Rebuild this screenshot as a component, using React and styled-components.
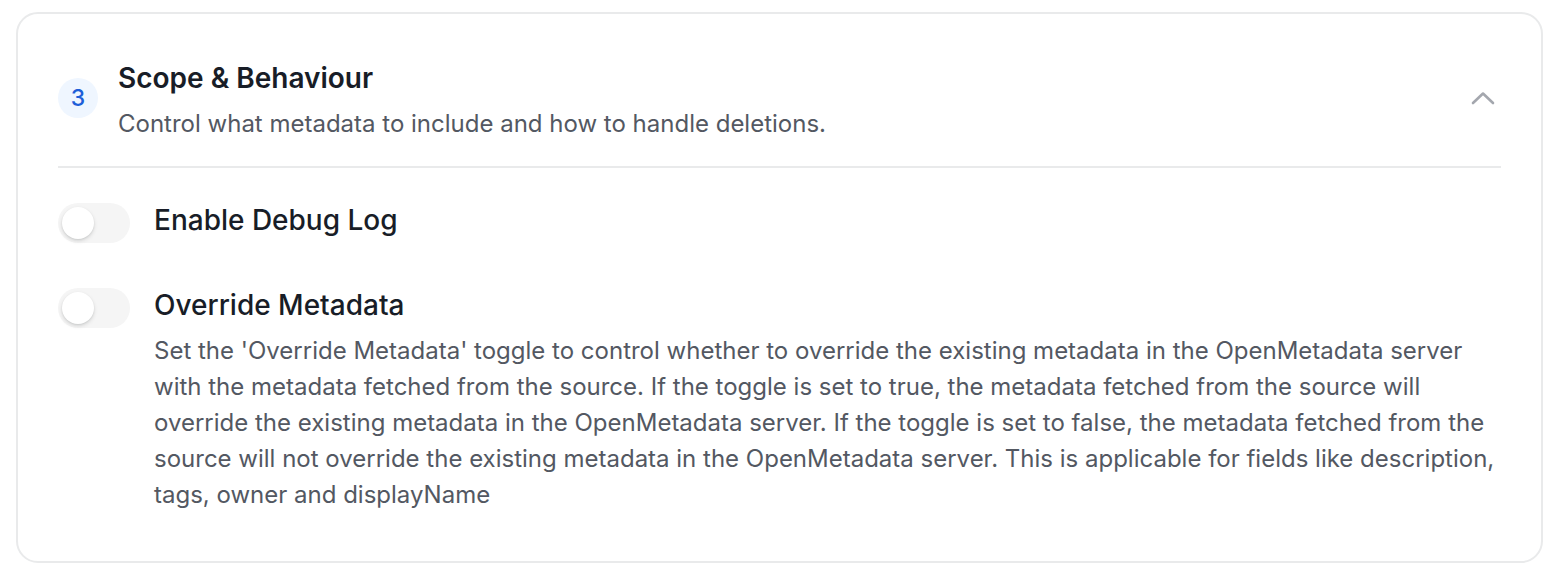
import React, { useState } from "react";
import styled, { createGlobalStyle } from "styled-components";

const GlobalStyle = createGlobalStyle`
  html, body {
    margin: 0;
    padding: 0;
    background: #ffffff;
  }
  body {
    font-family: Inter, "Noto Sans", "Liberation Sans", sans-serif;
    -webkit-font-smoothing: antialiased;
  }
  * { box-sizing: border-box; }
`;

const Page = styled.div`
  padding: 12px 21px 23px 16px;
`;

const Card = styled.section`
  border: 2px solid #e9eaeb;
  border-radius: 22px;
  background: #ffffff;
  padding: 46px 40px 48px 40px;
`;

const Header = styled.div`
  display: flex;
  align-items: center;
  gap: 20px;
  padding-bottom: 26px;
  border-bottom: 2px solid #e9eaeb;
`;

const StepBadge = styled.div`
  flex: 0 0 40px;
  width: 40px;
  height: 40px;
  border-radius: 50%;
  background: #eff6ff;
  color: #1d5fd8;
  display: flex;
  align-items: center;
  justify-content: center;
  font-size: 23px;
  font-weight: 500;
  margin-bottom: 4px;
`;

const HeaderText = styled.div`
  flex: 1;
  display: flex;
  flex-direction: column;
  gap: 12px;
`;

const Title = styled.h2`
  margin: 0;
  font-size: 28px;
  line-height: 36px;
  font-weight: 600;
  color: #181d27;
`;

const Subtitle = styled.p`
  margin: 0;
  font-size: 24px;
  line-height: 32px;
  color: #535862;
`;

const CollapseButton = styled.button`
  border: none;
  background: transparent;
  padding: 0;
  margin: 0 6px 5px 0;
  width: 24px;
  height: 14px;
  display: flex;
  align-items: center;
  justify-content: center;
  cursor: pointer;
  color: #a4a7ae;
`;

const Body = styled.div`
  display: flex;
  flex-direction: column;
  gap: 44px;
  padding-top: 34px;
`;

const ToggleRow = styled.div`
  display: flex;
  align-items: flex-start;
  gap: 24px;
`;

const Track = styled.button`
  flex: 0 0 72px;
  width: 72px;
  height: 40px;
  margin-top: 1px;
  border: none;
  border-radius: 20px;
  padding: 4px;
  background: ${(p) => (p.$on ? "#1570ef" : "#f5f5f5")};
  display: flex;
  justify-content: ${(p) => (p.$on ? "flex-end" : "flex-start")};
  cursor: pointer;
`;

const Knob = styled.span`
  width: 32px;
  height: 32px;
  border-radius: 50%;
  background: #ffffff;
  box-shadow: 0 2px 4px rgba(10, 13, 18, 0.12), 0 1px 2px rgba(10, 13, 18, 0.08);
`;

const ToggleText = styled.div`
  display: flex;
  flex-direction: column;
  gap: 10px;
  min-width: 0;
`;

const Label = styled.div`
  font-size: 28px;
  line-height: 36px;
  font-weight: 500;
  color: #181d27;
`;

const Help = styled.p`
  margin: 0;
  font-size: 24px;
  line-height: 36px;
  color: #535862;
`;

const ChevronUp = () => (
  <svg width="24" height="14" viewBox="0 0 24 14" fill="none">
    <polyline
      points="2,12 12,2.5 22,12"
      stroke="currentColor"
      strokeWidth="2.6"
      strokeLinecap="round"
      strokeLinejoin="round"
    />
  </svg>
);

const Toggle = ({ label, help }) => {
  const [on, setOn] = useState(false);
  return (
    <ToggleRow>
      <Track $on={on} onClick={() => setOn(!on)} aria-pressed={on}>
        <Knob />
      </Track>
      <ToggleText>
        <Label>{label}</Label>
        {help && <Help>{help}</Help>}
      </ToggleText>
    </ToggleRow>
  );
};

export default function App() {
  return (
    <>
      <GlobalStyle />
      <Page>
        <Card>
          <Header>
            <StepBadge>3</StepBadge>
            <HeaderText>
              <Title>Scope &amp; Behaviour</Title>
              <Subtitle>Control what metadata to include and how to handle deletions.</Subtitle>
            </HeaderText>
            <CollapseButton aria-label="Collapse">
              <ChevronUp />
            </CollapseButton>
          </Header>
          <Body>
            <Toggle label="Enable Debug Log" />
            <Toggle
              label="Override Metadata"
              help="Set the 'Override Metadata' toggle to control whether to override the existing metadata in the OpenMetadata server with the metadata fetched from the source. If the toggle is set to true, the metadata fetched from the source will override the existing metadata in the OpenMetadata server. If the toggle is set to false, the metadata fetched from the source will not override the existing metadata in the OpenMetadata server. This is applicable for fields like description, tags, owner and displayName"
            />
          </Body>
        </Card>
      </Page>
    </>
  );
}
